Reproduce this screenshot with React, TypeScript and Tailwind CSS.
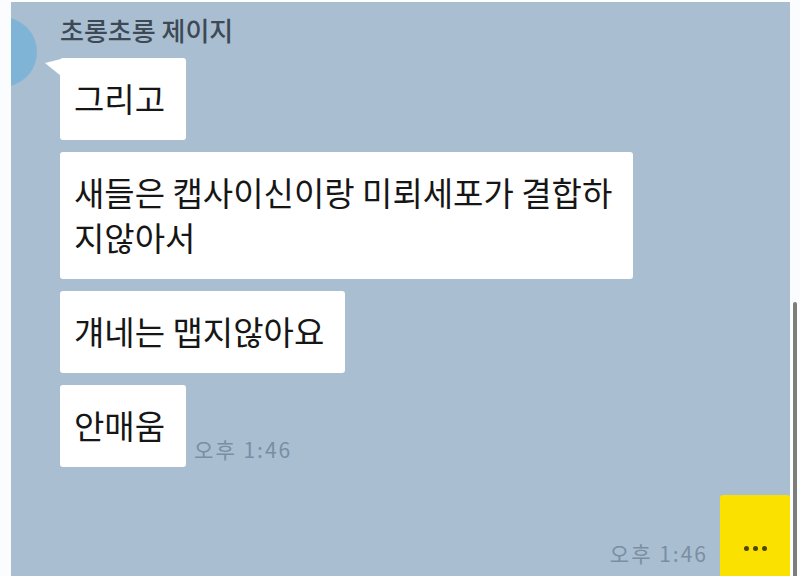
import React from 'react';

const font = { fontFamily: '"Noto Sans CJK KR", "Noto Sans", sans-serif' };

const Bubble = ({ children, tail }: { children: React.ReactNode; tail?: boolean }) => (
  <div className="relative self-start bg-white rounded-[3px] pl-[14px] pr-[21px] pt-[18px] pb-[19px] text-[33px] leading-[45px] text-[#161616]">
    {tail && (
      <svg className="absolute -left-[15px] top-0" width="16" height="20" viewBox="0 0 16 20">
        <polygon points="0,5 16,1 16,18" fill="#ffffff" />
      </svg>
    )}
    {children}
  </div>
);

const Time = ({ className = '' }: { className?: string }) => (
  <span className={`text-[21px] leading-[24px] tracking-[2px] text-[#7a8ea2] whitespace-nowrap ${className}`}>
    오후 1:46
  </span>
);

export default function App() {
  return (
    <div className="w-[800px] h-[576px] overflow-hidden bg-white flex" style={font}>
      <div className="w-[11px] shrink-0 bg-[#fbfcfd]" />

      <div className="flex-1 mt-[2px] bg-[#a9bed1] overflow-hidden flex flex-col">
        <div className="flex">
          <div className="ml-[-44px] mt-[15px] w-[70px] h-[70px] shrink-0 rounded-full bg-[#80b4d6]" />

          <div className="ml-[23px] pt-[13px] flex flex-col">
            <div className="text-[26px] leading-[30px] font-medium text-[#3d4955]">초롱초롱 제이지</div>

            <div className="mt-[13px] flex flex-col gap-[12px]">
              <Bubble tail>그리고</Bubble>
              <Bubble>
                새들은 캡사이신이랑 미뢰세포가 결합하
                <br />
                지않아서
              </Bubble>
              <Bubble>걔네는 맵지않아요</Bubble>
              <div className="flex items-end gap-[8px]">
                <Bubble>안매움</Bubble>
                <Time className="mb-[6px]" />
              </div>
            </div>
          </div>
        </div>

        <div className="mt-[28px] flex justify-end items-start gap-[12px]">
          <Time className="mt-[46px]" />
          <div className="w-[70px] h-[90px] bg-[#fae100] rounded-[3px] flex justify-center pt-[51px] gap-[4px]">
            <span className="w-[5px] h-[5px] rounded-full bg-[#4d4500]" />
            <span className="w-[5px] h-[5px] rounded-full bg-[#4d4500]" />
            <span className="w-[5px] h-[5px] rounded-full bg-[#4d4500]" />
          </div>
        </div>
      </div>

      <div className="w-[10px] shrink-0 bg-[#fbfcfd] flex flex-col pt-[302px]">
        <div className="ml-[3px] w-[4px] flex-1 rounded-t-full bg-[#7d7d7d]" />
      </div>
    </div>
  );
}
